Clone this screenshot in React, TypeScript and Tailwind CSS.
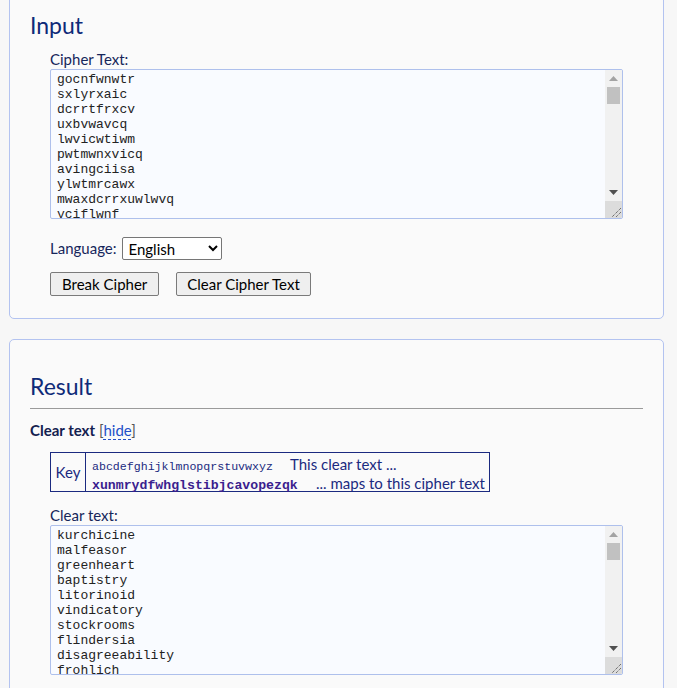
import React from 'react';

const KEY_PLAIN = 'abcdefghijklmnopqrstuvwxyz';
const KEY_CIPHER = 'xunmrydfwhglstibjcavopezqk';

const CLEAR_WORDS = [
  'kurchicine', 'malfeasor', 'greenheart', 'baptistry', 'litorinoid', 'vindicatory',
  'stockrooms', 'flindersia', 'disagreeability', 'frohlich', 'unmarred', 'hypnotized',
  'overslept', 'quadrantal', 'briskness', 'pinewoods', 'catechumen', 'solemnity',
  'trawlerman', 'ambergris', 'lachrymose', 'outwitted', 'gazetteer', 'honeycomb',
  'tricolour', 'weathervane', 'bookbinder', 'nightshade', 'effulgence', 'mortarboard',
  'plenteous', 'sandpiper', 'unfrocked', 'viscounty', 'archimandrite', 'cornflower',
  'dulcimer', 'frostbite', 'gallimaufry', 'harbinger', 'inkwell', 'jackdaw',
  'kingfisher', 'limestone', 'marrowbone', 'nettlesome', 'opalescent', 'periwinkle',
  'quicksilver', 'rosewater', 'shipwright', 'thimbleful', 'upholstery', 'vagabond',
  'wheelwright', 'yellowhammer', 'zoologist', 'blacksmith', 'candlewick', 'driftwood',
];

const encode = (w: string) =>
  w.split('').map(ch => {
    const i = KEY_PLAIN.indexOf(ch);
    return i >= 0 ? KEY_CIPHER[i] : ch;
  }).join('');

const clearText = CLEAR_WORDS.join('\n');
const cipherText = CLEAR_WORDS.map(encode).join('\n');

const sans = 'font-["Lato","Open_Sans",sans-serif]';

// classic scrollbar drawn next to the textarea (native ones are overlay in the headless browser)
const ScrollBar: React.FC = () => (
  <div className="w-[17px] shrink-0 flex flex-col bg-[#f1f1f1]">
    <div className="h-[17px] flex items-center justify-center">
      <svg width="9" height="5" viewBox="0 0 9 5"><path d="M4.5 0 L9 5 L0 5 Z" fill="#a3a3a3" /></svg>
    </div>
    <div className="mx-[2px] h-[17px] bg-[#c1c1c1]" />
    <div className="flex-1" />
    <div className="h-[17px] flex items-center justify-center">
      <svg width="9" height="5" viewBox="0 0 9 5"><path d="M0 0 L9 0 L4.5 5 Z" fill="#505050" /></svg>
    </div>
    <div className="h-[17px] bg-[#dcdcdc] flex items-end justify-end">
      <svg width="14" height="14" viewBox="0 0 14 14">
        <path d="M13 4 L4 13 M13 8 L8 13" stroke="#444" strokeWidth="1" strokeDasharray="1 1" />
      </svg>
    </div>
  </div>
);

const TextBox: React.FC<{ value: string }> = ({ value }) => (
  <div className="flex w-[573px] h-[150px] border border-[#aec0ec] rounded-[2px] bg-[#f9fbff] overflow-hidden">
    <textarea
      readOnly
      value={value}
      spellCheck={false}
      className='flex-1 resize-none overflow-hidden bg-transparent pl-[6px] pt-[2px] font-["Liberation_Mono",monospace] text-[13px] leading-[15px] text-[#222] outline-none'
    />
    <ScrollBar />
  </div>
);

export default function App() {
  return (
    <div className={`min-h-screen bg-[#f7f7f7] ${sans} pb-8 overflow-hidden`}>
      {/* Input panel (top edge scrolled out of view) */}
      <div className="ml-[9px] w-[655px] -mt-[10px] border border-[#b3c3f0] rounded-[5px] bg-[#fafafa] pt-[20px] pb-[22px]">
        <h2 className="ml-[20px] text-[23px] leading-[28px] text-[#0e2a78]">Input</h2>
        <div className="ml-[40px] mt-[11px]">
          <label className="block text-[15px] leading-[18px] text-[#16265a] mb-[1px]">Cipher Text:</label>
          <TextBox value={cipherText} />
          <div className="flex items-center mt-[18px] text-[15px] text-[#16265a]">
            <span>Language:</span>
            <select
              defaultValue="English"
              className="ml-[5px] w-[100px] h-[23px] border border-[#767676] rounded-[2px] bg-white text-[15px] text-black pl-[2px]"
            >
              <option>English</option>
              <option>German</option>
              <option>French</option>
              <option>Spanish</option>
            </select>
          </div>
          <div className="flex gap-[17px] mt-[12px]">
            <button className="h-[24px] px-[11px] border border-[#7a7a7a] rounded-[2px] bg-[#efefef] text-[15px] leading-[20px] text-black">
              Break Cipher
            </button>
            <button className="h-[24px] px-[10px] border border-[#7a7a7a] rounded-[2px] bg-[#efefef] text-[15px] leading-[20px] text-black">
              Clear Cipher Text
            </button>
          </div>
        </div>
      </div>

      {/* Result panel */}
      <div className="ml-[9px] w-[655px] mt-[20px] border border-[#b3c3f0] rounded-[5px] bg-[#fafafa] pt-[32px] pb-[20px]">
        <h2 className="ml-[20px] text-[23px] leading-[28px] text-[#0e2a78]">Result</h2>
        <hr className="ml-[20px] mr-[20px] mt-[8px] border-0 border-t border-[#9a9a9a]" />
        <div className="ml-[20px] mt-[12px] text-[15px] leading-[18px]">
          <span className="font-bold text-[#13204f]">Clear text</span>{' '}
          <span className="text-[#555]">[</span>
          <span className="text-[#2450c8] border-b border-dashed border-[#2450c8]">hide</span>
          <span className="text-[#555]">]</span>
        </div>

        <div className="ml-[40px] mt-[13px] inline-flex border border-[#1b2a80] text-[#1b2a80]">
          <div className="w-[35px] flex items-center justify-center border-r border-[#1b2a80] text-[15px]">Key</div>
          <div className="pl-[6px] pr-[4px] pb-[1px]">
            <div className="flex items-baseline h-[19px]">
              <span className='w-[198px] font-["Liberation_Mono",monospace] text-[11.6px] text-[#1b2a80]'>{KEY_PLAIN}</span>
              <span className="text-[15px]">This clear text ...</span>
            </div>
            <div className="flex items-baseline h-[18px]">
              <span className='w-[224px] font-["Liberation_Mono",monospace] font-bold text-[13.2px] text-[#3a1e8e]'>{KEY_CIPHER}</span>
              <span className="text-[15px]">... maps to this cipher text</span>
            </div>
          </div>
        </div>

        <div className="ml-[40px] mt-[14px]">
          <label className="block text-[15px] leading-[18px] text-[#16265a] mb-[1px]">Clear text:</label>
          <TextBox value={clearText} />
        </div>
      </div>
    </div>
  );
}
